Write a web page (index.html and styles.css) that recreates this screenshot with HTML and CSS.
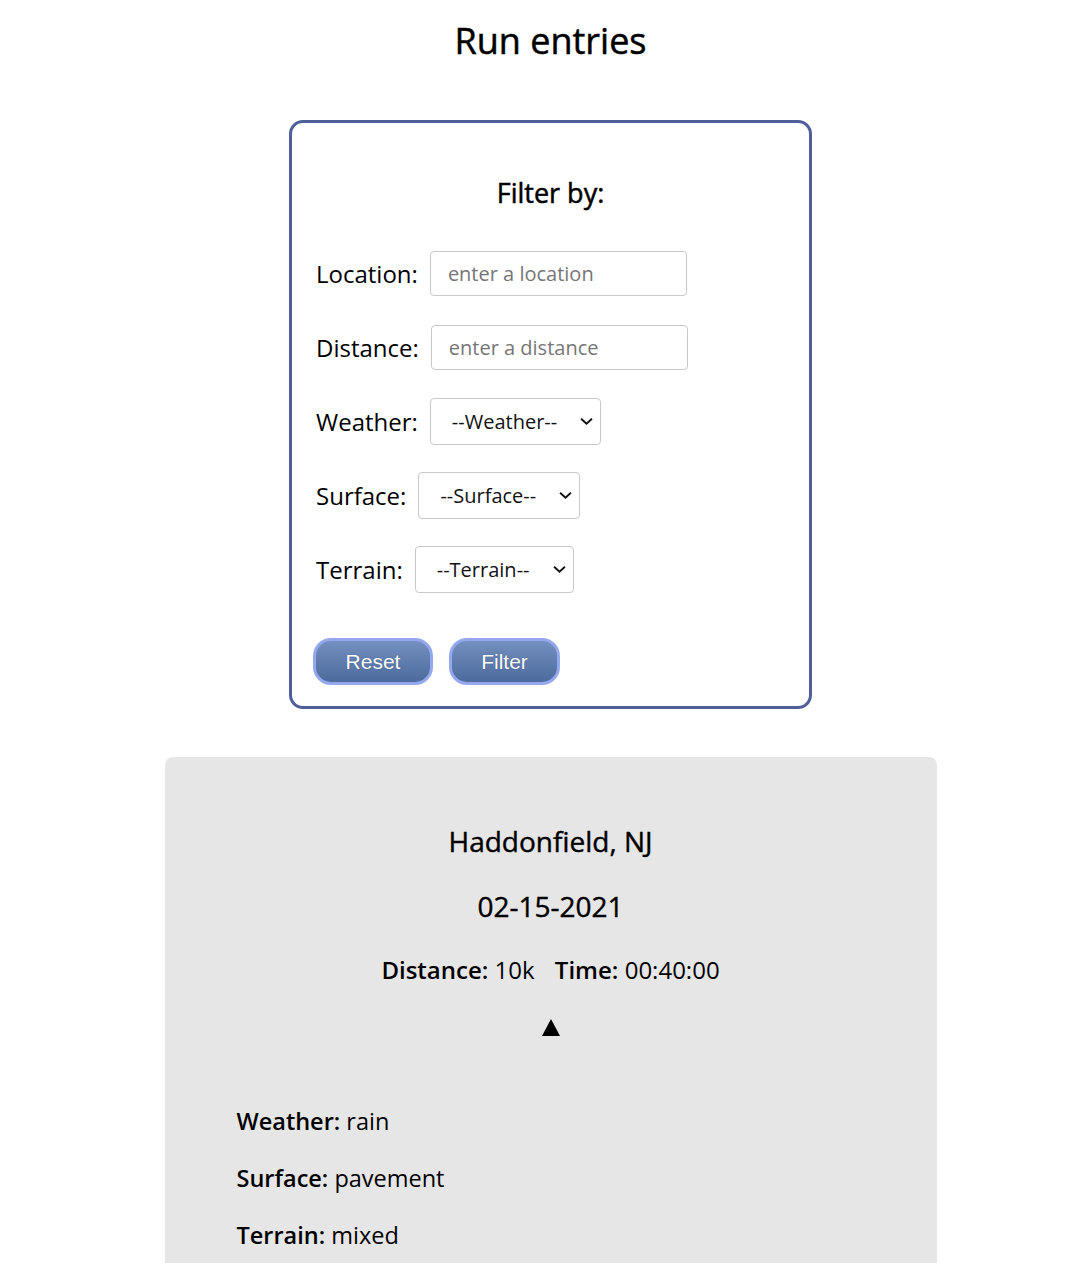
FILE: index.html
```html
<!DOCTYPE html>
<html lang="en">
<head>
<meta charset="utf-8">
<title>Run entries</title>
<link rel="stylesheet" href="styles.css">
</head>
<body>
<h1 class="page-title">Run entries</h1>

<form class="filter-box">
  <h2 class="filter-title">Filter by:</h2>
  <div class="row"><label class="lbl">Location:</label><input class="txt" type="text" placeholder="enter a location"></div>
  <div class="row"><label class="lbl">Distance:</label><input class="txt" type="text" placeholder="enter a distance"></div>
  <div class="row"><label class="lbl">Weather:</label><span class="sel-wrap sel-weather"><select class="sel"><option>--Weather--</option></select><svg class="chev" viewBox="0 0 12 8" width="13" height="9"><path d="M1 1.5 L6 6 L11 1.5" fill="none" stroke="#111" stroke-width="1.8"/></svg></span></div>
  <div class="row"><label class="lbl">Surface:</label><span class="sel-wrap sel-surface"><select class="sel"><option>--Surface--</option></select><svg class="chev" viewBox="0 0 12 8" width="13" height="9"><path d="M1 1.5 L6 6 L11 1.5" fill="none" stroke="#111" stroke-width="1.8"/></svg></span></div>
  <div class="row"><label class="lbl">Terrain:</label><span class="sel-wrap sel-terrain"><select class="sel"><option>--Terrain--</option></select><svg class="chev" viewBox="0 0 12 8" width="13" height="9"><path d="M1 1.5 L6 6 L11 1.5" fill="none" stroke="#111" stroke-width="1.8"/></svg></span></div>
  <div class="btns">
    <button type="button" class="btn btn-reset">Reset</button>
    <button type="button" class="btn btn-filter">Filter</button>
  </div>
</form>

<section class="card">
  <h3 class="card-loc">Haddonfield, NJ</h3>
  <h3 class="card-date">02-15-2021</h3>
  <p class="card-stats"><b>Distance:</b> 10k <span class="sp"></span><b>Time:</b> 00:40:00</p>
  <div class="toggle"><span class="tri"></span></div>
  <div class="details">
    <p><b>Weather:</b> rain</p>
    <p><b>Surface:</b> pavement</p>
    <p><b>Terrain:</b> mixed</p>
  </div>
</section>
</body>
</html>
```

FILE: styles.css
```css
html, body {
  margin: 0;
  padding: 0;
  background: #fff;
}
body {
  font-family: "Open Sans", "Liberation Sans", sans-serif;
  color: #000;
  display: flex;
  flex-direction: column;
  align-items: center;
  padding-left: 11px;
}
.page-title {
  font-size: 36px;
  font-weight: 500;
  -webkit-text-stroke: 0.5px #000;
  margin: 16px 0 0;
  line-height: 50px;
  height: 50px;
}
.filter-box {
  margin-top: 54px;
  width: 523px;
  box-sizing: border-box;
  height: 589px;
  border: 3px solid #4f5f9a;
  border-radius: 14px;
  padding: 0 24px;
  display: flex;
  flex-direction: column;
}
.filter-title {
  text-align: center;
  font-size: 27px;
  font-weight: 500;
  -webkit-text-stroke: 0.5px #000;
  margin: 52px 0 0;
  line-height: 36px;
}
.row {
  display: flex;
  align-items: center;
  height: 47px;
  margin-top: 27px;
}
.filter-title + .row { margin-top: 39px; }
.lbl {
  font-size: 24px;
  margin-right: 12px;
  white-space: nowrap;
}
.txt {
  width: 257px;
  height: 45px;
  box-sizing: border-box;
  border: 1px solid #c9c9c9;
  border-radius: 4px;
  padding: 0 17px;
  font-family: "Open Sans", sans-serif;
  font-size: 20px;
  color: #111;
  outline: none;
}
.txt::placeholder { color: #767676; }
.sel-wrap {
  position: relative;
  display: inline-block;
}
.sel {
  -webkit-appearance: none;
  appearance: none;
  height: 47px;
  box-sizing: border-box;
  border: 1px solid #c9c9c9;
  border-radius: 4px;
  background: #fff;
  font-family: "Open Sans", sans-serif;
  font-size: 20px;
  color: #111;
  padding: 0 0 0 21px;
  outline: none;
}
.sel-weather .sel { width: 171px; }
.sel-surface .sel { width: 162px; }
.sel-terrain .sel { width: 159px; }
.chev {
  position: absolute;
  right: 8px;
  top: 19px;
  pointer-events: none;
}
.btns {
  display: flex;
  gap: 16px;
  margin-top: 45px;
  margin-left: -3px;
}
.btn {
  height: 47px;
  box-sizing: border-box;
  border: 3px solid #93a8ee;
  border-radius: 18px;
  background: linear-gradient(#7390c0, #4c6a9c);
  color: #fff;
  font-family: "Liberation Sans", Arial, sans-serif;
  font-size: 21px;
  text-shadow: 0 0 1px rgba(0,0,0,0.35);
  padding: 0;
}
.btn-reset { width: 120px; }
.btn-filter { width: 111px; }

.card {
  margin-top: 48px;
  width: 772px;
  box-sizing: border-box;
  background: #e6e6e6;
  border-radius: 8px 8px 0 0;
  padding: 60px 72px 20px;
  min-height: 540px;
}
.card-loc, .card-date {
  text-align: center;
  font-size: 28px;
  font-weight: 500;
  -webkit-text-stroke: 0.4px #000;
  margin: 0;
  line-height: 48px;
}
.card-date { margin-top: 17px; }
.card-stats {
  text-align: center;
  font-size: 24px;
  margin: 24px 0 0;
  line-height: 32px;
}
.card-stats b { font-weight: 600; }
.sp { display: inline-block; width: 14px; }
.toggle {
  display: flex;
  justify-content: center;
  height: 28px;
  align-items: center;
  margin-top: 27px;
}
.tri {
  width: 0;
  height: 0;
  border-left: 9px solid transparent;
  border-right: 9px solid transparent;
  border-bottom: 17px solid #000;
}
.details { margin-top: 64px; }
.details p {
  font-size: 23.5px;
  margin: 0 0 25px;
  line-height: 32px;
}
.details b { font-weight: 600; }
```
